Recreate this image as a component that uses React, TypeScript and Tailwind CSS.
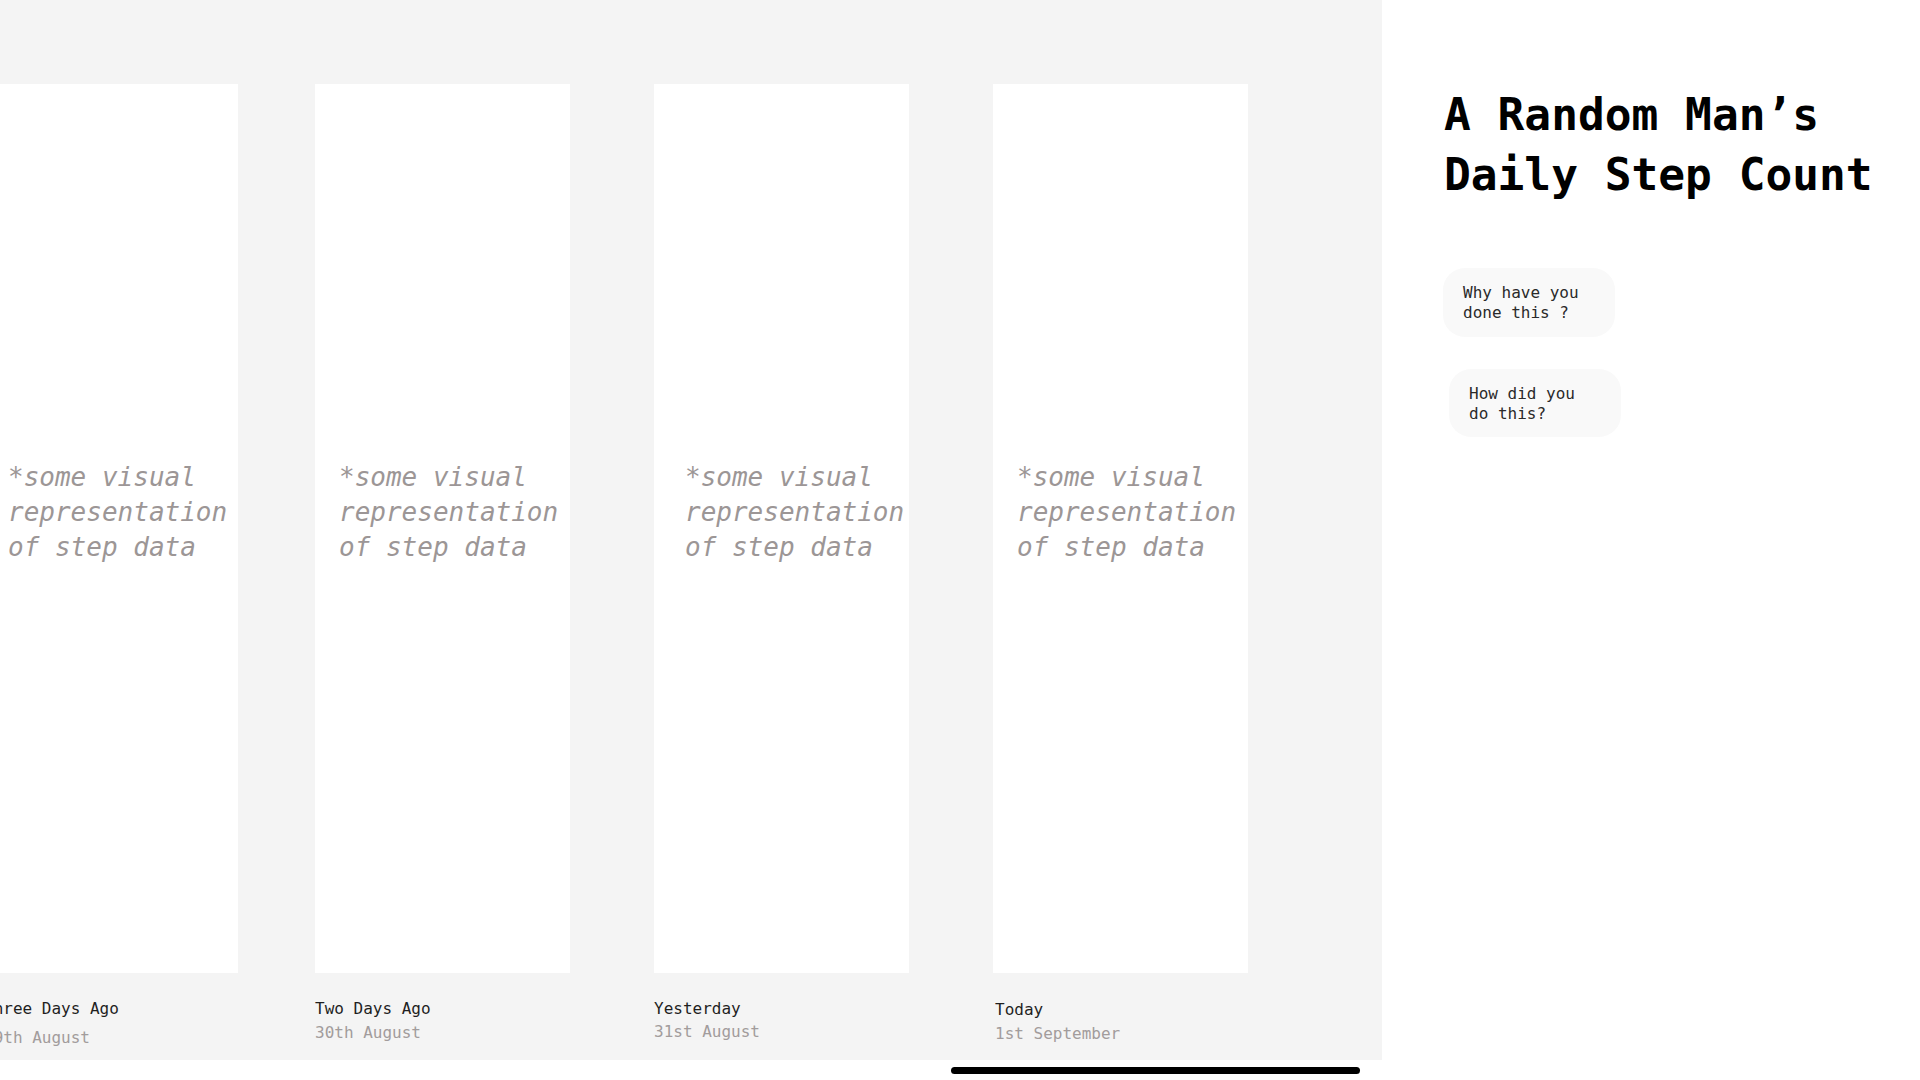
const days = [
  { label: "Three Days Ago", date: "29th August", gap: "ml-[-17px]", pad: "pl-[25px]", labelPl: "pl-[1px]", labelMt: "mt-[26px]", dateMt: "mt-[9px]" },
  { label: "Two Days Ago", date: "30th August", gap: "ml-[77px]", pad: "pl-[24px]", labelPl: "pl-0", labelMt: "mt-[26px]", dateMt: "mt-[4px]" },
  { label: "Yesterday", date: "31st August", gap: "ml-[84px]", pad: "pl-[31px]", labelPl: "pl-0", labelMt: "mt-[26px]", dateMt: "mt-[3px]" },
  { label: "Today", date: "1st September", gap: "ml-[84px]", pad: "pl-[24px]", labelPl: "pl-[2px]", labelMt: "mt-[27px]", dateMt: "mt-[4px]" },
];

const DayCard = ({ day }: { day: (typeof days)[number] }) => {
  return (
    <div className={`${day.gap} w-[255px] shrink-0 flex flex-col`}>
      <div className={`h-[889px] bg-white pt-[376px] ${day.pad}`}>
        <p className="text-[26px] leading-[35px] italic text-[#9c9696]">
          *some visual
          <br />
          representation
          <br />
          of step data
        </p>
      </div>
      <div className={`${day.labelMt} ${day.labelPl} text-[16px] leading-[20px] text-[#1f1f1f] whitespace-nowrap`}>
        {day.label}
      </div>
      <div className={`${day.dateMt} ${day.labelPl} text-[16px] leading-[20px] text-[#a29c9c] whitespace-nowrap`}>
        {day.date}
      </div>
    </div>
  );
};

export default function App() {
  return (
    <div className="flex w-[1920px] h-[1080px] bg-white overflow-hidden font-['DejaVu_Sans_Mono',monospace]">
      {/* scrolling strip of days */}
      <div className="w-[1382px] shrink-0 flex flex-col">
        <div className="h-[1060px] bg-[#f4f4f4] overflow-hidden">
          <div className="flex pt-[84px]">
            {days.map((d) => (
              <DayCard key={d.label} day={d} />
            ))}
          </div>
        </div>
        <div className="pt-[7px] pl-[951px]">
          <div className="w-[409px] h-[7px] rounded-full bg-black" />
        </div>
      </div>

      {/* side panel */}
      <div className="flex-1 pl-[62px] pt-[85px]">
        <h1 className="text-[44.5px] leading-[60px] font-bold text-black">
          A Random Man’s
          <br />
          Daily Step Count
        </h1>

        <div className="mt-[63px] flex flex-col gap-[32px]">
          <button className="w-[172px] h-[69px] ml-[-1px] rounded-[22px] bg-[#f9f9f9] pl-5 pt-[15px] text-left text-[16px] leading-[20px] text-[#2a2a2a] flex items-start">
            <span>
              Why have you
              <br />
              done this ?
            </span>
          </button>
          <button className="w-[172px] h-[68px] ml-[5px] rounded-[22px] bg-[#f9f9f9] pl-5 pt-[15px] text-left text-[16px] leading-[20px] text-[#2a2a2a] flex items-start">
            <span>
              How did you
              <br />
              do this?
            </span>
          </button>
        </div>
      </div>
    </div>
  );
}
